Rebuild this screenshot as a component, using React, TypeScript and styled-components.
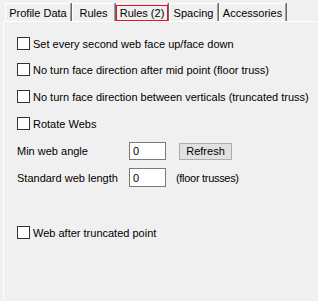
import styled, { createGlobalStyle } from "styled-components";

const GlobalStyle = createGlobalStyle`
  html, body {
    margin: 0;
    padding: 0;
    background: #f0f0f0;
    font-family: "Liberation Sans", Arial, sans-serif;
    font-size: 11px;
    color: #000;
  }
`;

const Wrapper = styled.div`
  width: 318px;
  height: 301px;
  overflow: hidden;
  background: #f0f0f0;
  padding-top: 3px;
  box-sizing: border-box;
`;

const TabStrip = styled.div`
  display: flex;
  padding-left: 5px;
  height: 18px;
`;

const Tab = styled.div<{ $w: number }>`
  width: ${(p) => p.$w}px;
  height: 18px;
  box-sizing: border-box;
  display: flex;
  align-items: center;
  justify-content: center;
  border-top: 1px solid #ffffff;
  border-left: 1px solid #ffffff;
  border-right: 1px solid #a0a0a0;
  box-shadow: 1px 0 0 #696969;
  margin-right: 1px;
  padding-top: 1px;
  white-space: nowrap;
`;

const Focus = styled.span`
  border: 1px solid #e81123;
  padding: 1px 3px 0 3px;
  line-height: 13px;
`;

const Panel = styled.div`
  margin-left: 3px;
  border-top: 1px solid #ffffff;
  border-left: 1px solid #ffffff;
  height: 300px;
  padding: 15px 0 0 13px;
  display: flex;
  flex-direction: column;
`;

const CheckRow = styled.label<{ $mt: number }>`
  display: flex;
  align-items: center;
  height: 13px;
  margin-top: ${(p) => p.$mt}px;
  white-space: nowrap;
`;

const Box = styled.span`
  width: 13px;
  height: 13px;
  box-sizing: border-box;
  border: 1px solid #333333;
  background: #ffffff;
  margin-right: 3px;
  flex-shrink: 0;
`;

const FieldRow = styled.div<{ $mt: number; $h: number }>`
  display: flex;
  align-items: center;
  height: ${(p) => p.$h}px;
  margin-top: ${(p) => p.$mt}px;
`;

const Label = styled.span`
  width: 112px;
  white-space: nowrap;
`;

const Field = styled.div`
  width: 37px;
  height: 100%;
  box-sizing: border-box;
  border: 1px solid #7a7a7a;
  background: #ffffff;
  padding: 0 3px;
  display: flex;
  align-items: center;
`;

const Button = styled.div`
  margin-left: 13px;
  width: 53px;
  height: 17px;
  box-sizing: border-box;
  border: 1px solid #adadad;
  background: #e1e1e1;
  display: flex;
  align-items: center;
  justify-content: center;
`;

const Note = styled.span`
  margin-left: 10px;
  letter-spacing: -0.3px;
`;

export default function App() {
  return (
    <Wrapper>
      <GlobalStyle />
      <TabStrip>
        <Tab $w={66}>Profile Data</Tab>
        <Tab $w={43}>Rules</Tab>
        <Tab $w={52}><Focus>Rules (2)</Focus></Tab>
        <Tab $w={49}>Spacing</Tab>
        <Tab $w={67}>Accessories</Tab>
      </TabStrip>
      <Panel>
        <CheckRow $mt={0}><Box />Set every second web face up/face down</CheckRow>
        <CheckRow $mt={13}><Box />No turn face direction after mid point (floor truss)</CheckRow>
        <CheckRow $mt={14}><Box />No turn face direction between verticals (truncated truss)</CheckRow>
        <CheckRow $mt={14}><Box />Rotate Webs</CheckRow>
        <FieldRow $mt={12} $h={18}>
          <Label>Min web angle</Label>
          <Field>0</Field>
          <Button>Refresh</Button>
        </FieldRow>
        <FieldRow $mt={8} $h={19}>
          <Label>Standard web length</Label>
          <Field>0</Field>
          <Note>(floor trusses)</Note>
        </FieldRow>
        <CheckRow $mt={39}><Box />Web after truncated point</CheckRow>
      </Panel>
    </Wrapper>
  );
}
